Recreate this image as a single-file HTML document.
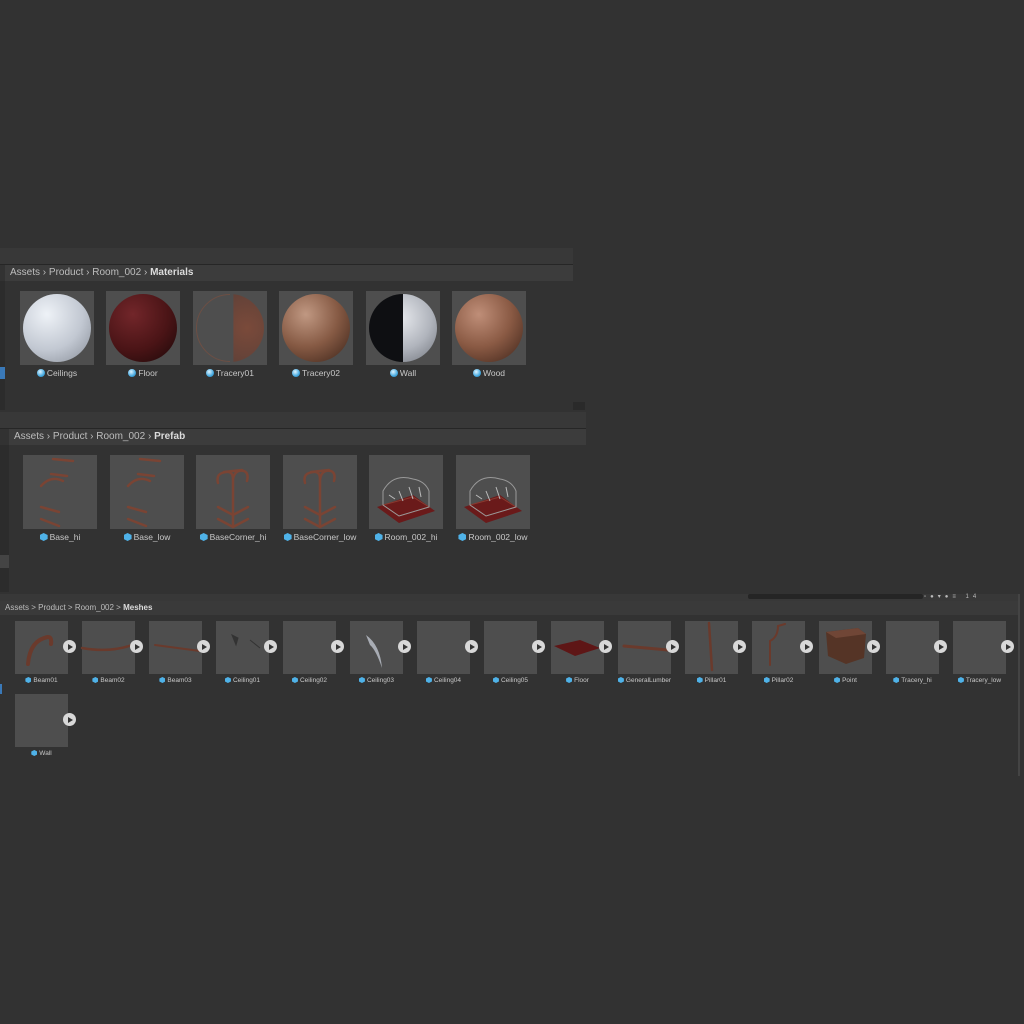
<!DOCTYPE html>
<html><head><meta charset="utf-8"><style>
*{margin:0;padding:0;box-sizing:border-box}
body{width:1024px;height:1024px;background:#323232;position:relative;overflow:hidden;font-family:"Liberation Sans",sans-serif;color:#c4c4c4}
.a{position:absolute}
.bar{background:#383838}
.crumb{background:#3c3c3c;font-size:10px;line-height:16px;color:#bdbdbd;padding-left:5px;white-space:nowrap}
.crumb b{color:#dcdcdc}
.th{position:absolute;background:#4e4e4e;overflow:hidden}
.lb{position:absolute;text-align:center;font-size:8.5px;color:#c8c8c8;white-space:nowrap}
.ic{display:inline-block;width:8px;height:8px;border-radius:50%;background:radial-gradient(circle at 40% 35%,#e0f4ff,#45a9e0 60%,#1e6a98);vertical-align:-1px;margin-right:2px}
.cb{display:inline-block;width:8px;height:8px;background:#4fb2e8;clip-path:polygon(50% 0,100% 25%,100% 75%,50% 100%,0 75%,0 25%);vertical-align:-1px;margin-right:2px}
.sl{font-size:6.5px}
.sl .cb{width:6px;height:6px}
.sp{position:absolute;border-radius:50%}
.pl{position:absolute;width:13px;height:13px;border-radius:50%;background:#d8d8d8}
.pl:after{content:"";position:absolute;left:5px;top:3.5px;border-left:5px solid #333;border-top:3px solid transparent;border-bottom:3px solid transparent}
</style></head><body>

<div class="a bar" style="left:0;top:248px;width:573px;height:16px"></div>
<div class="a" style="left:0;top:264px;width:573px;height:1px;background:#262626"></div>
<div class="a crumb" style="left:5px;top:265px;width:568px;height:16px">Assets › Product › Room_002 › <b>Materials</b></div>
<div class="a" style="left:0;top:281px;width:5px;height:129px;background:#2c2c2c"></div>
<div class="a" style="left:0;top:367px;width:5px;height:12px;background:#3a79b8"></div>
<div class="a" style="left:573px;top:402px;width:12px;height:8px;background:#2a2a2a"></div>

<div class="th" style="left:20px;top:291px;width:74px;height:74px"><div class="sp" style="left:3px;top:3px;width:68px;height:68px;background:radial-gradient(circle at 35% 30%,#eef2f7,#c2c8d2 55%,#868c96)"></div></div>
<div class="lb" style="left:14px;top:368px;width:86px"><span class="ic"></span>Ceilings</div>
<div class="th" style="left:106px;top:291px;width:74px;height:74px"><div class="sp" style="left:3px;top:3px;width:68px;height:68px;background:radial-gradient(circle at 35% 30%,#72262a,#4a1416 55%,#1a0808)"></div></div>
<div class="lb" style="left:100px;top:368px;width:86px"><span class="ic"></span>Floor</div>
<div class="th" style="left:193px;top:291px;width:74px;height:74px"><div class="sp" style="left:3px;top:3px;width:68px;height:68px;clip-path:inset(0 0 0 55%);background:radial-gradient(circle at 75% 50%,#7a4a3a,#5e4038 70%,#4e4e4e)"></div><div class="sp" style="left:3px;top:3px;width:68px;height:68px;border:1px solid #7a5040;clip-path:inset(0 50% 0 0);opacity:.7"></div></div>
<div class="lb" style="left:187px;top:368px;width:86px"><span class="ic"></span>Tracery01</div>
<div class="th" style="left:279px;top:291px;width:74px;height:74px"><div class="sp" style="left:3px;top:3px;width:68px;height:68px;background:radial-gradient(circle at 35% 30%,#c09882,#865a44 50%,#3a2218)"></div></div>
<div class="lb" style="left:273px;top:368px;width:86px"><span class="ic"></span>Tracery02</div>
<div class="th" style="left:366px;top:291px;width:74px;height:74px"><div class="sp" style="left:3px;top:3px;width:68px;height:68px;background:linear-gradient(90deg,#0e0f12 0 50%,transparent 50%),radial-gradient(circle at 45% 35%,#e8eaee,#b0b4bc 55%,#6e727a)"></div></div>
<div class="lb" style="left:360px;top:368px;width:86px"><span class="ic"></span>Wall</div>
<div class="th" style="left:452px;top:291px;width:74px;height:74px"><div class="sp" style="left:3px;top:3px;width:68px;height:68px;background:radial-gradient(circle at 35% 30%,#bf8e78,#8a5a44 50%,#3d2319)"></div></div>
<div class="lb" style="left:446px;top:368px;width:86px"><span class="ic"></span>Wood</div>

<div class="a bar" style="left:0;top:412px;width:586px;height:16px"></div>
<div class="a" style="left:0;top:428px;width:586px;height:1px;background:#262626"></div>
<div class="a crumb" style="left:9px;top:429px;width:577px;height:16px">Assets › Product › Room_002 › <b>Prefab</b></div>
<div class="a" style="left:0;top:445px;width:9px;height:147px;background:#2c2c2c"></div>
<div class="a" style="left:0;top:555px;width:9px;height:13px;background:#444"></div>

<svg class="a" style="left:0;top:0" width="600" height="600">
<defs><g id="base" stroke="#7a4434" stroke-width="2.5" fill="none" stroke-linecap="round"><path d="M30 4 L50 6"/><path d="M18 31 Q28 20 40 26"/><path d="M28 19 L44 21"/><path d="M18 52 L36 57"/><path d="M18 64 L36 71"/></g>
<g id="corner" stroke="#7a4434" stroke-width="2.5" fill="none" stroke-linecap="round"><path d="M37 70 L37 24 Q37 14 26 18 Q20 20 22 28"/><path d="M37 24 Q39 14 48 16 Q53 18 51 26"/><path d="M28 17 L46 15"/><path d="M37 60 L22 52"/><path d="M37 60 L52 52"/><path d="M37 72 L22 64"/><path d="M37 72 L52 64"/></g>
<g id="room"><path d="M8 52 L30 68 L66 56 L44 40 Z" fill="#6a1a1a"/><path d="M14 50 L30 61 L60 52 L44 42 Z" fill="none" stroke="#8a3a30"/><path d="M14 36 Q24 18 44 24 Q56 26 60 36 L60 52 L30 61 L14 50 Z" fill="none" stroke="#999" stroke-width="1"/><path d="M20 40 L26 44 M30 36 L34 46 M40 32 L44 44 M50 32 L52 42" stroke="#bbb" stroke-width="1"/></g></defs>
<rect x="23" y="455" width="74" height="74" fill="#4e4e4e"/><use href="#base" x="23" y="455"/>
<rect x="110" y="455" width="74" height="74" fill="#4e4e4e"/><use href="#base" x="110" y="455"/>
<rect x="196" y="455" width="74" height="74" fill="#4e4e4e"/><use href="#corner" x="196" y="455"/>
<rect x="283" y="455" width="74" height="74" fill="#4e4e4e"/><use href="#corner" x="283" y="455"/>
<rect x="369" y="455" width="74" height="74" fill="#4e4e4e"/><use href="#room" x="369" y="455"/>
<rect x="456" y="455" width="74" height="74" fill="#4e4e4e"/><use href="#room" x="456" y="455"/>
</svg>
<div class="lb" style="left:17px;top:532px;width:86px"><span class="cb"></span>Base_hi</div>
<div class="lb" style="left:104px;top:532px;width:86px"><span class="cb"></span>Base_low</div>
<div class="lb" style="left:190px;top:532px;width:86px"><span class="cb"></span>BaseCorner_hi</div>
<div class="lb" style="left:277px;top:532px;width:86px"><span class="cb"></span>BaseCorner_low</div>
<div class="lb" style="left:363px;top:532px;width:86px"><span class="cb"></span>Room_002_hi</div>
<div class="lb" style="left:450px;top:532px;width:86px"><span class="cb"></span>Room_002_low</div>

<div class="a bar" style="left:0;top:594px;width:1018px;height:7px"></div>
<div class="a" style="left:748px;top:594px;width:175px;height:5px;background:#252525;border-radius:2px"></div>
<div class="a" style="left:924px;top:594px;width:94px;height:6px;font-size:6px;color:#bbb;letter-spacing:4px;line-height:6px">▫●▾●≡ 14</div>
<div class="a crumb" style="left:0;top:601px;width:1018px;height:14px;font-size:8px;line-height:14px;background:#3a3a3a">Assets &gt; Product &gt; Room_002 &gt; <b>Meshes</b></div>
<div class="a" style="left:1018px;top:594px;width:2px;height:182px;background:#444"></div>
<div class="a" style="left:0;top:684px;width:2px;height:10px;background:#3a79b8"></div>

<svg class="a" style="left:0;top:0" width="1024" height="780">
<g fill="#4e4e4e">
<rect x="15" y="621" width="53" height="53"/><rect x="82" y="621" width="53" height="53"/><rect x="149" y="621" width="53" height="53"/><rect x="216" y="621" width="53" height="53"/><rect x="283" y="621" width="53" height="53"/><rect x="350" y="621" width="53" height="53"/><rect x="417" y="621" width="53" height="53"/><rect x="484" y="621" width="53" height="53"/><rect x="551" y="621" width="53" height="53"/><rect x="618" y="621" width="53" height="53"/><rect x="685" y="621" width="53" height="53"/><rect x="752" y="621" width="53" height="53"/><rect x="819" y="621" width="53" height="53"/><rect x="886" y="621" width="53" height="53"/><rect x="953" y="621" width="53" height="53"/><rect x="15" y="694" width="53" height="53"/>
</g>
<g fill="none" stroke="#6a3a2c" stroke-width="3" stroke-linecap="round">
<path d="M28 664 Q30 640 48 637 Q52 637 51 644" stroke-width="4"/>
<path d="M82 648 Q110 653 132 645" stroke-width="2.5"/>
<path d="M155 645 L200 651" stroke-width="2"/>
<path d="M624 646 L668 650" stroke-width="3"/>
<path d="M709 623 L712 670" stroke-width="2.5"/>
<path d="M770 665 L770 641 Q778 637 778 626 L785 624" stroke-width="2"/>
</g>
<path d="M366 635 Q380 645 382 668 Q376 650 370 645 Z" fill="#a8acb4"/>
<path d="M232 635 L238 638 L236 645 Z M250 640 L260 648" stroke="#333" fill="#333"/>
<path d="M554 646 L580 640 L600 648 L575 656 Z" fill="#5e1616"/>
<path d="M826 632 L858 628 L866 634 L864 658 L846 664 L828 656 Z" fill="#553426"/><path d="M826 632 L858 628 L866 634 L836 638 Z" fill="#704636"/>
</svg>
<div class="pl" style="left:63px;top:640px"></div><div class="pl" style="left:130px;top:640px"></div><div class="pl" style="left:197px;top:640px"></div><div class="pl" style="left:264px;top:640px"></div><div class="pl" style="left:331px;top:640px"></div><div class="pl" style="left:398px;top:640px"></div><div class="pl" style="left:465px;top:640px"></div><div class="pl" style="left:532px;top:640px"></div><div class="pl" style="left:599px;top:640px"></div><div class="pl" style="left:666px;top:640px"></div><div class="pl" style="left:733px;top:640px"></div><div class="pl" style="left:800px;top:640px"></div><div class="pl" style="left:867px;top:640px"></div><div class="pl" style="left:934px;top:640px"></div><div class="pl" style="left:1001px;top:640px"></div><div class="pl" style="left:63px;top:713px"></div>

<div class="lb sl" style="left:8px;top:677px;width:67px"><span class="cb"></span>Beam01</div>
<div class="lb sl" style="left:75px;top:677px;width:67px"><span class="cb"></span>Beam02</div>
<div class="lb sl" style="left:142px;top:677px;width:67px"><span class="cb"></span>Beam03</div>
<div class="lb sl" style="left:209px;top:677px;width:67px"><span class="cb"></span>Ceiling01</div>
<div class="lb sl" style="left:276px;top:677px;width:67px"><span class="cb"></span>Ceiling02</div>
<div class="lb sl" style="left:343px;top:677px;width:67px"><span class="cb"></span>Ceiling03</div>
<div class="lb sl" style="left:410px;top:677px;width:67px"><span class="cb"></span>Ceiling04</div>
<div class="lb sl" style="left:477px;top:677px;width:67px"><span class="cb"></span>Ceiling05</div>
<div class="lb sl" style="left:544px;top:677px;width:67px"><span class="cb"></span>Floor</div>
<div class="lb sl" style="left:611px;top:677px;width:67px"><span class="cb"></span>GeneralLumber</div>
<div class="lb sl" style="left:678px;top:677px;width:67px"><span class="cb"></span>Pillar01</div>
<div class="lb sl" style="left:745px;top:677px;width:67px"><span class="cb"></span>Pillar02</div>
<div class="lb sl" style="left:812px;top:677px;width:67px"><span class="cb"></span>Point</div>
<div class="lb sl" style="left:879px;top:677px;width:67px"><span class="cb"></span>Tracery_hi</div>
<div class="lb sl" style="left:946px;top:677px;width:67px"><span class="cb"></span>Tracery_low</div>
<div class="lb sl" style="left:8px;top:750px;width:67px"><span class="cb"></span>Wall</div>
</body></html>
